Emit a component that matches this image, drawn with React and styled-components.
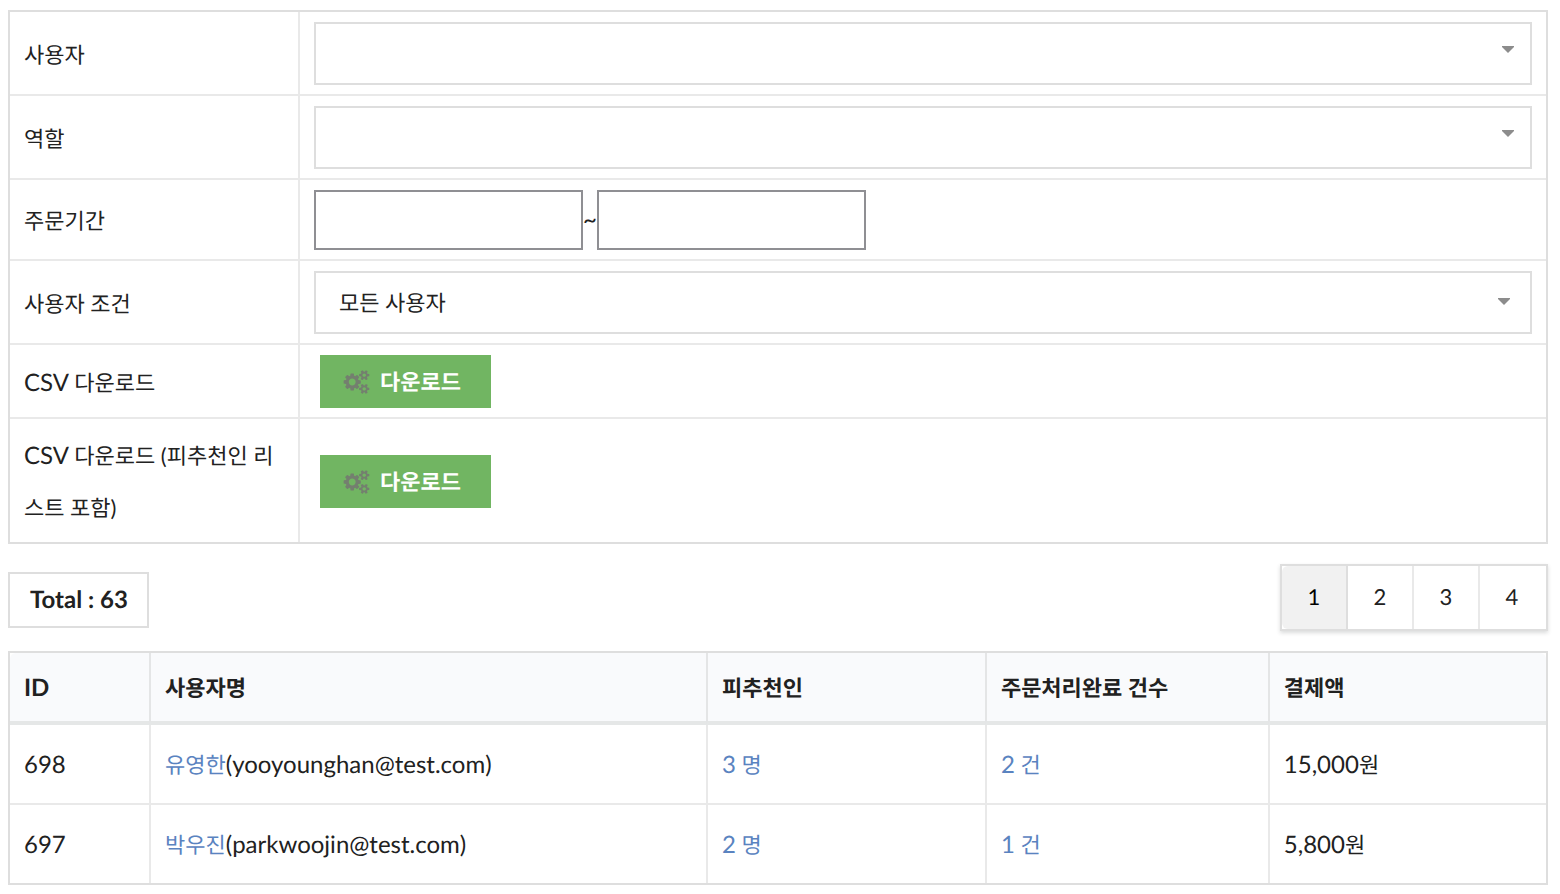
import { useState } from "react";
import styled, { createGlobalStyle, css } from "styled-components";

const GlobalStyle = createGlobalStyle`
  *, *::before, *::after {
    box-sizing: border-box;
  }
  body {
    margin: 0;
    background-color: #fff;
  }
  body, button, input, select {
    font-family: Lato, "Noto Sans CJK KR", sans-serif;
    font-size: 24px;
    line-height: 52px;
    color: #212121;
    text-rendering: geometricPrecision;
  }
`;

const Page = styled.main`
  padding: 10px 12px 9px 8px;
`;

const Table = styled.table`
  width: 100%;
  border: 2px solid #dedede;
  border-collapse: separate;
  border-spacing: 0;
  table-layout: fixed;
  text-align: left;
`;

const Ko = styled.span`
  font-size: 22px;
  line-height: 22px;
`;

const FilterCell = styled.td`
  padding: 10px 14px 9px;
  line-height: 0;
  border-left: 2px solid #e9e9e9;
  tr + tr > & {
    border-top: 2px solid #e9e9e9;
  }
`;

const FilterHead = styled.th`
  width: 18.75%;
  padding: 11px 14px 8px;
  font-weight: 400;
  word-break: break-all;
  tr + tr > & {
    border-top: 2px solid #e9e9e9;
  }
  label {
    display: block;
  }
`;

const SelectWrap = styled.div`
  position: relative;
`;

const Select = styled.select`
  display: block;
  width: 100%;
  height: 63px;
  padding: 0 60px 0 23px;
  border: 2px solid #dedede;
  border-radius: 0;
  background-color: #fff;
  font-size: 22px;
  appearance: none;
`;

const Caret = styled.svg`
  position: absolute;
  top: 24px;
  right: 18px;
  width: 12px;
  height: 7px;
  fill: #8c8c8c;
  pointer-events: none;
  ${({ $inset }) => $inset && css`
    top: 27px;
    right: 22px;
  `}
`;

const Period = styled.div`
  display: flex;
  align-items: center;
  line-height: 52px;
`;

const DateInput = styled.input`
  width: 269px;
  height: 60px;
  padding: 0 12px;
  border: 2px solid #8f8f93;
  border-radius: 0;
`;

const DownloadButton = styled.button`
  display: inline-flex;
  align-items: center;
  gap: 10px;
  height: 53px;
  margin-left: 6px;
  padding: 1px 30px 0 23px;
  border: 0;
  background-color: #71b562;
  color: #fff;
  font-size: 22px;
  font-weight: 700;
  svg {
    width: 27px;
    height: 24px;
    fill: #747f6f;
  }
`;

const Summary = styled.div`
  display: flex;
  justify-content: space-between;
  align-items: flex-start;
  padding: 20px 0;
`;

const Total = styled.div`
  margin-top: 8px;
  padding: 0 19px 0 20px;
  border: 2px solid #dedede;
  font-weight: 700;
`;

const Pagination = styled.nav`
  display: flex;
  border: 2px solid #dedede;
  box-shadow: 0 2px 4px rgba(34, 36, 38, 0.16);
`;

const PageButton = styled.button`
  width: 66px;
  height: 63px;
  padding: 0 0 2px;
  border: 0;
  border-right: 2px solid #e9e9e9;
  background-color: #fff;
  font-size: 22px;
  &:last-child {
    border-right-color: transparent;
  }
  ${({ $active }) => $active && css`
    border-right-color: #dedede;
    border-radius: 6px 0 0 6px;
    background-color: #f1f1f1;
    color: #000;
  `}
`;

const HeadCell = styled.th`
  width: ${({ $width }) => $width};
  padding: 9px 14px 7px;
  border-bottom: 4px solid #e5e7e7;
  background-color: #f9fafc;
  font-weight: 700;
  & + & {
    border-left: 2px solid #e4e5e6;
  }
  &:first-child {
    border-top-left-radius: 6px;
  }
  &:last-child {
    border-top-right-radius: 6px;
  }
`;

const Cell = styled.td`
  padding: 14px 14px 12px;
  & + & {
    border-left: 2px solid #e9e9e9;
  }
  tr + tr > & {
    border-top: 2px solid #e9e9e9;
  }
`;

const Link = styled.a`
  color: #5a83c0;
  text-decoration: none;
`;

const columns = [
  { name: "ID", width: "9.05%" },
  { name: "사용자명", width: "36.26%" },
  { name: "피추천인", width: "18.16%" },
  { name: "주문처리완료 건수", width: "18.42%" },
  { name: "결제액", width: "18.11%" },
];

const users = [
  { id: 698, name: "유영한", email: "yooyounghan@test.com", referred: 3, orders: 2, amount: "15,000" },
  { id: 697, name: "박우진", email: "parkwoojin@test.com", referred: 2, orders: 1, amount: "5,800" },
];

const pages = [1, 2, 3, 4];

const Dropdown = ({ id, inset, children }) => (
  <SelectWrap>
    <Select id={id}>{children}</Select>
    <Caret $inset={inset} viewBox="0 0 12 7" aria-hidden="true">
      <path d="M0 0H12V1L6 7L0 1Z" />
    </Caret>
  </SelectWrap>
);

// Font Awesome 4 "cogs"
const CogsIcon = () => (
  <svg viewBox="0 0 1920 1792" aria-hidden="true">
    <path d="M896 896q0-106-75-181t-181-75-181 75-75 181 75 181 181 75 181-75 75-181zm768 512q0-52-38-90t-90-38-90 38-38 90q0 53 37.500 90.500t90.500 37.500 90.500-37.500 37.500-90.500zm0-1024q0-52-38-90t-90-38-90 38-38 90q0 53 37.500 90.500t90.500 37.500 90.500-37.500 37.500-90.500zm-384 421v185q0 10-7 19.500t-16 10.500l-155 24q-11 35-32 76 34 48 90 115 7 11 7 20 0 12-7 19-23 30-82.500 89.500t-78.500 59.500q-11 0-21-7l-115-90q-37 19-77 31-11 108-23 155-7 24-30 24h-186q-11 0-20-7.500t-10-17.500l-23-153q-34-10-75-31l-118 89q-7 7-20 7-11 0-21-8-144-133-144-160 0-9 7-19 10-14 41-53t47-61q-23-44-35-82l-152-24q-10-1-17-9.500t-7-19.500v-185q0-10 7-19.500t16-10.500l155-24q11-35 32-76-34-48-90-115-7-11-7-20 0-12 7-20 22-30 82-89t79-59q11 0 21 7l115 90q34-18 77-32 11-108 23-154 7-24 30-24h186q11 0 20 7.500t10 17.500l23 153q34 10 75 31l118-89q8-7 20-7 11 0 21 8 144 133 144 160 0 8-7 19-12 16-42 54t-45 60q23 48 34 82l152 23q10 2 17 10.500t7 19.500zm640 533v140q0 16-149 31-12 27-30 52 51 113 51 138 0 4-4 7-122 71-124 71-8 0-46-47t-52-68q-20 2-30 2t-30-2q-14 21-52 68t-46 47q-2 0-124-71-4-3-4-7 0-25 51-138-18-25-30-52-149-15-149-31v-140q0-16 149-31 13-29 30-52-51-113-51-138 0-4 4-7 4-2 35-20t59-34 30-16q8 0 46 46.500t52 67.500q20-2 30-2t30 2q51-71 92-112l6-2q4 0 124 70 4 3 4 7 0 25-51 138 17 23 30 52 149 15 149 31zm0-1024v140q0 16-149 31-12 27-30 52 51 113 51 138 0 4-4 7-122 71-124 71-8 0-46-47t-52-68q-20 2-30 2t-30-2q-14 21-52 68t-46 47q-2 0-124-71-4-3-4-7 0-25 51-138-18-25-30-52-149-15-149-31v-140q0-16 149-31 13-29 30-52-51-113-51-138 0-4 4-7 4-2 35-20t59-34 30-16q8 0 46 46.500t52 67.500q20-2 30-2t30 2q51-71 92-112l6-2q4 0 124 70 4 3 4 7 0 25-51 138 17 23 30 52 149 15 149 31z" />
  </svg>
);

const Download = ({ id }) => (
  <DownloadButton id={id} type="button">
    <CogsIcon />
    다운로드
  </DownloadButton>
);

const Filters = () => (
  <Table>
    <tbody>
      <tr>
        <FilterHead scope="row"><label htmlFor="user"><Ko>사용자</Ko></label></FilterHead>
        <FilterCell><Dropdown id="user" /></FilterCell>
      </tr>
      <tr>
        <FilterHead scope="row"><label htmlFor="role"><Ko>역할</Ko></label></FilterHead>
        <FilterCell><Dropdown id="role" /></FilterCell>
      </tr>
      <tr>
        <FilterHead scope="row"><label htmlFor="from"><Ko>주문기간</Ko></label></FilterHead>
        <FilterCell>
          <Period>
            <DateInput id="from" type="text" />
            ~
            <DateInput type="text" aria-label="주문기간" />
          </Period>
        </FilterCell>
      </tr>
      <tr>
        <FilterHead scope="row"><label htmlFor="condition"><Ko>사용자 조건</Ko></label></FilterHead>
        <FilterCell>
          <Dropdown id="condition" inset>
            <option>모든 사용자</option>
          </Dropdown>
        </FilterCell>
      </tr>
      <tr>
        <FilterHead scope="row"><label htmlFor="csv">CSV <Ko>다운로드</Ko></label></FilterHead>
        <FilterCell><Download id="csv" /></FilterCell>
      </tr>
      <tr>
        <FilterHead scope="row">
          <label htmlFor="csv-referred">CSV <Ko>다운로드 (피추천인 리스트 포함)</Ko></label>
        </FilterHead>
        <FilterCell><Download id="csv-referred" /></FilterCell>
      </tr>
    </tbody>
  </Table>
);

const UserTable = () => (
  <Table>
    <thead>
      <tr>
        {columns.map(({ name, width }) => <HeadCell key={name} scope="col" $width={width}>
          {name === "ID" ? name : <Ko>{name}</Ko>}
        </HeadCell>)}
      </tr>
    </thead>
    <tbody>
      {users.map((user) => <tr key={user.id}>
        <Cell>{user.id}</Cell>
        <Cell><Link href="#user"><Ko>{user.name}</Ko></Link>({user.email})</Cell>
        <Cell><Link href="#referred">{user.referred}<Ko> 명</Ko></Link></Cell>
        <Cell><Link href="#orders">{user.orders}<Ko> 건</Ko></Link></Cell>
        <Cell>{user.amount}<Ko>원</Ko></Cell>
      </tr>)}
    </tbody>
  </Table>
);

export default function App() {
  const [page, setPage] = useState(1);

  return <>
    <GlobalStyle />
    <Page>
      <Filters />
      <Summary>
        <Total>Total : 63</Total>
        <Pagination>
          {pages.map((num) => <PageButton
            key={num}
            type="button"
            $active={num === page}
            onClick={() => setPage(num)}
          >
            {num}
          </PageButton>)}
        </Pagination>
      </Summary>
      <UserTable />
    </Page>
  </>;
}
